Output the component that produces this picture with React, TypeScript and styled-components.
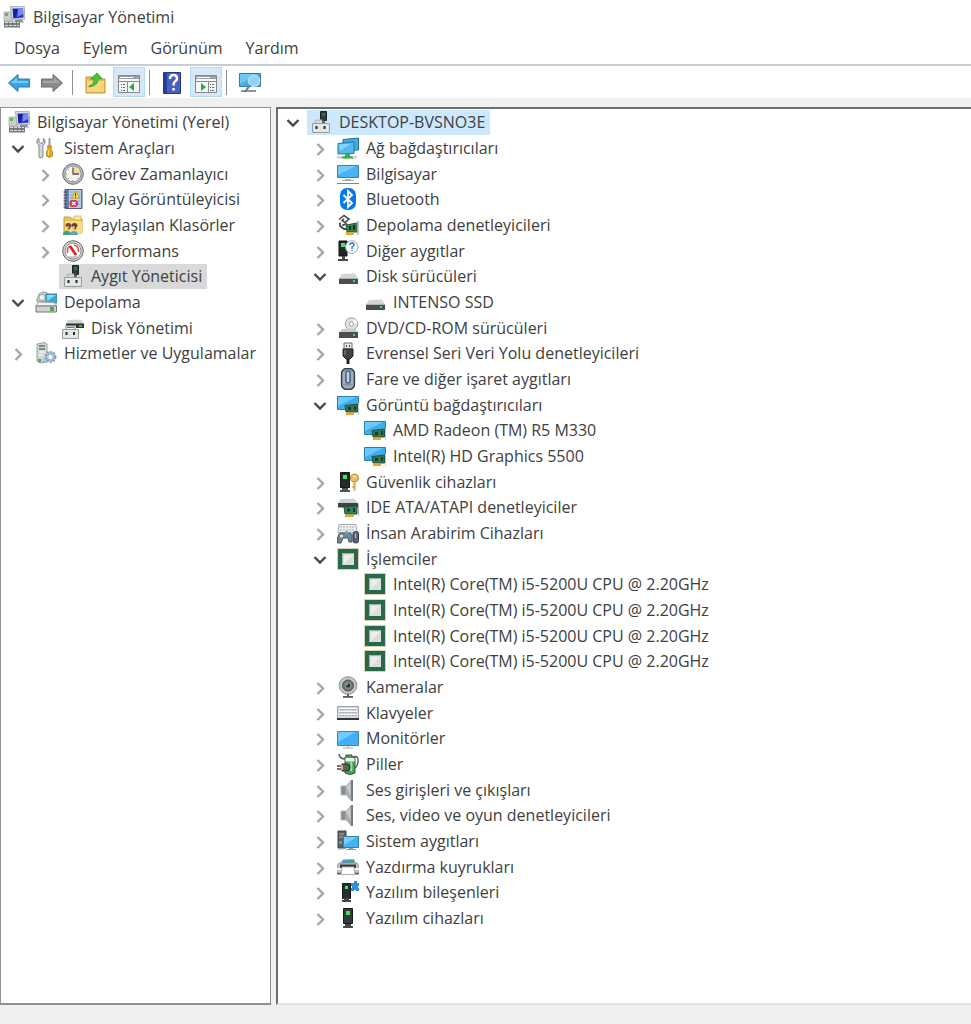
import React, { useState } from "react";
import styled, { createGlobalStyle } from "styled-components";

const GlobalStyle = createGlobalStyle`
  * { box-sizing: border-box; }
  body {
    margin: 0;
    background: #f0f0f0;
    color: #404040;
    font-family: "Open Sans", "Noto Sans", sans-serif;
    font-size: 16px;
    line-height: 24px;
  }
  button { font: inherit; color: inherit; background: none; border: 0; padding: 0; cursor: default; }
`;

const Window = styled.div`
  min-height: 100vh;
  display: flex;
  flex-direction: column;
`;

const TitleBar = styled.header`
  display: flex;
  align-items: center;
  gap: 8px;
  height: 33px;
  padding: 0 3px;
  background: #fff;
`;

const Title = styled.h1`
  margin: 0;
  font-size: 16px;
  font-weight: 400;
  line-height: 24px;
`;

const MenuBar = styled.nav`
  display: flex;
  align-items: center;
  gap: 23px;
  height: 31px;
  padding: 0 14px 2px;
  background: #fff;
`;

const MenuButton = styled.button`
  line-height: 24px;
`;

const ToolBar = styled.div`
  display: flex;
  align-items: center;
  gap: 1px;
  height: 34px;
  padding: 0 3px;
  background: #fff;
  border-top: 2px solid #c9ccd0;
`;

const ToolButton = styled.button<{ $active?: boolean }>`
  display: flex;
  align-items: center;
  justify-content: center;
  width: 32px;
  height: 30px;
  padding-top: 2px;
  background: ${(p) => (p.$active ? "#d3e8fa" : "transparent")};
  border: 1px solid ${(p) => (p.$active ? "#b5d9f7" : "transparent")};
`;

const Separator = styled.span`
  width: 1px;
  height: 25px;
  margin: 0 6px 0 3px;
  background: #8f8f8f;
`;

const Workspace = styled.main`
  flex: 1;
  display: grid;
  grid-template-columns: 271px minmax(0, 1fr);
  gap: 5px;
  padding: 9px 0 19px;
  background: #f0f0f0;
`;

const Pane = styled.section<{ $primary?: boolean }>`
  background: #fff;
  border-style: solid;
  border-width: ${(p) => (p.$primary ? "2px 0 2px 2px" : "1px 1px 2px")};
  border-color: ${(p) => (p.$primary ? "#6e6e6e #6e6e6e #e3e3e3" : "#8d9096")};
  padding: ${(p) => (p.$primary ? "0 0 0 2px" : "1px 0 0 4px")};
`;

const Tree = styled.ul`
  display: grid;
  grid-auto-rows: 26px 26px 25px;
  margin: 0;
  padding: 0;
  list-style: none;
`;

const Row = styled.li<{ $depth: number }>`
  display: flex;
  align-items: center;
  padding-left: ${(p) => p.$depth * 27}px;
`;

const Toggle = styled.button`
  display: flex;
  align-items: center;
  justify-content: center;
  width: 27px;
  height: 24px;
  padding-right: 2px;
`;

const ToggleSpace = styled.span`
  width: 27px;
`;

const Item = styled.button<{ $tint?: string }>`
  display: flex;
  align-items: center;
  gap: 7px;
  height: 25px;
  padding: 0 5px 0 3px;
  white-space: nowrap;
  background: ${(p) => p.$tint ?? "transparent"};
`;

const Glyph = styled.svg`
  display: block;
  flex: none;
`;

const art: Record<string, React.ReactNode> = {
  console: (
    <>
      <path d="M7.500.5 21 0l1 13-13 1z" fill="#d9dce6" stroke="#a3a7b4" />
      <path d="M9.500 2.500h10.500l.5 9-10 1z" fill="#2432c4" />
      <path d="M10 3h5l-3 8.500-1.500.5z" fill="#1420a0" />
      <path d="M15 3h5l.3 5-6 3z" fill="#7488ee" />
      <path d="M1 6h7l1 9H1z" fill="#c9cccb" stroke="#a3a6a5" strokeWidth=".7" />
      <path d="M2 7h3v3H2z" fill="#6db05f" />
      <path d="m12 14 7-.5 2 3h-9z" fill="#8f939d" />
      <path d="M1 15.500h16v6H1z" fill="#777b7f" />
      <path d="M2 16.500h14M2 19.500h14" stroke="#dcdee0" strokeDasharray="3 1" />
    </>
  ),
  tools: (
    <>
      <path d="M2 3q-1 4 2 5v12q2 2 4 0V8q3-1 2-5L8.500 1.500V5L6 6.500 4 5V1.500z" fill="#d3d6d9" stroke="#85898d" />
      <path d="M13.500 1h2v8h-2z" fill="#989ca0" />
      <path d="M12.500 9h4l-.5 3 1.500 3v4q-3 3-6 0v-4l1.500-3z" fill="#f2a515" stroke="#b87512" strokeWidth=".8" />
      <path d="M13.500 13v5" stroke="#ffdd78" />
    </>
  ),
  clock: (
    <>
      <circle cx="11" cy="11" r="10.300" fill="#b7b9bc" stroke="#707478" />
      <circle cx="11" cy="11" r="8" fill="#f4f3ee" stroke="#92969b" />
      <path d="M11 3.500A7.500 7.500 0 0 1 18.500 11H11z" fill="#f5d999" />
      <path d="M11 4.500V11h6" stroke="#4c535c" strokeWidth="1.300" fill="none" />
      <path d="M4 11h1M11 17v1.500M6 6l.7.700M6 16l.7-.7M16 16l-.7-.7" stroke="#84888c" />
    </>
  ),
  events: (
    <>
      <path d="M3 1.500h17v19H3z" fill="#7185b2" stroke="#4f5f8c" />
      <path d="M7 2h12v18H7z" fill="#b5cdee" />
      <path d="M8 4h10M8 7h10M8 10h10M8 13h10M8 16h10" stroke="#7d9fd0" strokeWidth=".7" />
      <path d="M1.500 4h4M1.500 7h4M1.500 10h4M1.500 13h4M1.500 16h4M1.500 19h4" stroke="#43474f" />
      <path d="m13.500 3 4.500 7H9.500z" fill="#f8df35" stroke="#bd9a18" strokeWidth=".8" />
      <path d="M13.500 5v3M13.500 8.500v1" stroke="#493d12" />
      <path d="M9 12h5l2 2v3l-2 2H9l-1.500-2v-3z" fill="#df3844" />
      <path d="m10 14 3.500 3m0-3L10 17" stroke="#fff" strokeWidth="1.200" />
    </>
  ),
  shared: (
    <>
      <path d="M2 3h6l2 2h10v14H2z" fill="#e9c65b" stroke="#c69a38" />
      <path d="M12 2h7v4h-7z" fill="#f9e9a6" stroke="#d1aa4d" strokeWidth=".7" />
      <path d="M3 7h17v12H3z" fill="#f7dc82" />
      <path d="M3.500 12q0-3 3-3t3 3L7 16z" fill="#6a4a2c" />
      <path d="M9.500 12q0-3 3-3t3 3L13 16z" fill="#6b4427" />
      <path d="M4 13q2-2 3 0l-1 3zM10 13q2-2 3 0l-1 3z" fill="#e6b287" />
      <path d="M1 21v-2q4-5 8 0v2z" fill="#36a77c" />
      <path d="M8 21q1-6 7-3l1 3z" fill="#57a8bd" />
    </>
  ),
  performance: (
    <>
      <circle cx="11" cy="11" r="10.300" fill="#d2d2d2" stroke="#656a6e" />
      <circle cx="11" cy="11" r="8" fill="#fff" stroke="#8d8d8d" />
      <path d="M5.500 13V8.500L8 6M12 5q5 1 4.500 7" fill="none" stroke="#d94a4a" strokeWidth="1.500" />
      <path d="m8 6 6 9" stroke="#d91e1e" strokeWidth="2.500" />
      <path d="M7 17h8" stroke="#999" />
    </>
  ),
  device: (
    <>
      <path d="M10.500.5h6v9h-6z" fill="#353a39" stroke="#222" />
      <path d="M12 2h3v3h-3z" fill="#287c37" />
      <path d="M12 9.500h3V13h-3z" fill="#626867" />
      <path d="M5.500 13V9.500H12" fill="none" stroke="#c1c2c2" strokeWidth="2" />
      <path d="M2.500 12.500h17v9h-17z" fill="#e5e6e6" stroke="#989b9d" />
      <path d="M5.500 15h2v3h-2zM13.500 15h2v3h-2z" fill="#262929" />
    </>
  ),
  storage: (
    <>
      <path d="M1.500 10 4 3q5-4 9 0v8z" fill="#cbcecd" stroke="#90969a" />
      <circle cx="7" cy="6.500" r="3" fill="#eff0ee" stroke="#a5aaa9" />
      <path d="M11 3h11v9H11z" fill="#37a9dd" stroke="#487b91" />
      <path d="m12 4h9l-9 6z" fill="#8ad8f4" />
      <path d="m3 11 16 .5 3 3.500H1z" fill="#f0f1f1" stroke="#a5a8a9" />
      <path d="M1 15h20.500v6H1z" fill="#d0d3d3" stroke="#737778" />
      <path d="M15 16h4v4h-4z" fill="#52a848" />
    </>
  ),
  diskmgmt: (
    <>
      <path d="m6 3 13-.5 3 4.500H4z" fill="#d1d3d3" />
      <path d="M4 6.500h18V11H4z" fill="#2f3635" />
      <path d="M17 8h3v2h-3z" fill="#33c34a" />
      <path d="M4 13V9.500h9V13" fill="none" stroke="#c0c2c2" strokeWidth="2" />
      <path d="M.5 12.500h16v9H.5z" fill="#e5e6e6" stroke="#989b9d" />
      <path d="M3.500 15h2v3h-2zM11 15h2v3h-2z" fill="#262929" />
    </>
  ),
  services: (
    <>
      <path d="m2 2 7-1.500L12 2v18l-7 1-3-2z" fill="#d1d5d7" stroke="#9aa0a3" />
      <path d="M4 4h6M4 7h6" stroke="#5d7375" strokeWidth="1.500" />
      <path d="M4 10h6M4 13h4" stroke="#fff" />
      <path d="M3 17h3v3H3z" fill="#5ba56d" />
      <circle cx="15.500" cy="15" r="4.700" fill="#aac4dc" stroke="#86a3c0" strokeWidth="2.500" strokeDasharray="2 1" />
      <circle cx="15.500" cy="15" r="2" fill="#fff" />
      <circle cx="9.500" cy="18.500" r="2" fill="#b4c9da" stroke="#86a3c0" strokeDasharray="1 1" />
    </>
  ),
  network: (
    <>
      <path d="M6 2.500 21.500 1v12L6 14z" fill="#42aae3" stroke="#25749f" />
      <path d="M1 6.500 17 5v11.500L1 17z" fill="#55b9f3" stroke="#2478a4" />
      <path d="M2 7.500 14 6.500 3 14z" fill="#87d3fc" />
      <path d="M0 19h20v2.500H0z" fill="#ced3cf" />
      <path d="M8 17h5v2l3 1v1.500H5V20l3-1z" fill="#35ae4b" />
    </>
  ),
  computer: (
    <>
      <path d="M.5 2.500h21v12H.5z" fill="#48b3f4" stroke="#3983ac" />
      <path d="M1 3h18L1 12z" fill="#76caff" />
      <path d="M8 16.500h6M5 17.500h12" stroke="#a7aeb5" />
      <path d="M0 20.500h22" stroke="#7a858e" />
    </>
  ),
  monitor: (
    <>
      <path d="M.5 4.500h21v14H.5z" fill="#42aff5" stroke="#4386aa" />
      <path d="M1 5h18L1 15z" fill="#71c9fd" />
      <path d="M10 19h2v1.500H6v1h10v-1h-4" fill="#a1a5a8" />
    </>
  ),
  bluetooth: (
    <>
      <rect x="3" y="0" width="16" height="22" rx="7" fill="#0a78ed" />
      <path d="m6.500 7 8.500 8-4 4V3l4 4-8.500 8" fill="none" stroke="#fff" strokeWidth="1.800" />
    </>
  ),
  controller: (
    <>
      <path d="m2 5.500 5-4 5 3.500-4 3.500-3-2 2-1.500" fill="#fff" stroke="#4b4f4e" strokeWidth="1.600" />
      <path d="M3 8.500V12l4 3h5M5 11.500l5-2" fill="none" stroke="#454948" strokeWidth="1.800" />
      <path d="m9 11 11-2v9H10z" fill="#378158" stroke="#1c5c3a" />
      <path d="M12 12h2v4h-2M16 11h2v5h-2" fill="#142f24" />
      <path d="M21 7v14" stroke="#aeb0b1" strokeWidth="1.500" />
      <path d="M9 18h8v3H9z" fill="#e8a632" />
    </>
  ),
  other: (
    <>
      <path d="M2 1h8v15H2z" fill="#222828" stroke="#111" />
      <path d="M4 3h4v4H4z" fill="#58db67" />
      <path d="M5 16h3v3h3v2H1v-2h4z" fill="#454b49" />
      <circle cx="14.800" cy="7" r="6.300" fill="#fbfcfe" stroke="#a0a5ab" />
      <path d="M13 5q0-2 2-2t2 2q0 1-2 2v2M15 10v1" fill="none" stroke="#246fc4" strokeWidth="1.300" />
    </>
  ),
  disk: (
    <>
      <path d="m5 9 13-.5 3 5H2z" fill="#d3d4d4" />
      <path d="M2 13h19v6H2z" fill="#4a4e4d" />
      <path d="M2 13.500h19" stroke="#b0b3b2" />
      <path d="M16 15h2v2h-2z" fill="#43df4e" />
    </>
  ),
  dvd: (
    <>
      <circle cx="14.500" cy="7" r="6.300" fill="#dedfdf" stroke="#a1a4a5" />
      <path d="m14.500 7 3-5q3 2 3 4z" fill="#fff" />
      <circle cx="14.500" cy="7" r="2" fill="#fff" stroke="#a1a1a1" />
      <path d="m5 12 13-.5 3 4H2z" fill="#c9caca" />
      <path d="M2 15h19v6H2z" fill="#4a4e4d" />
      <path d="M16 17h2v2h-2z" fill="#43df4e" />
    </>
  ),
  usb: (
    <>
      <path d="M7 1h8v6H7z" fill="#e9e9e9" stroke="#696d6e" />
      <path d="M9 3h1v2H9zM12 3h1v2h-1z" fill="#444" />
      <path d="M6 7h10v7l-3 3H9l-3-3z" fill="#3d4243" stroke="#222" />
      <path d="M8 8v5" stroke="#8b9092" />
      <path d="M9.500 17h3v5h-3z" fill="#1f2425" />
    </>
  ),
  mouse: (
    <>
      <rect x="4.500" y=".5" width="13" height="21" rx="5" fill="#8b97a6" stroke="#333c49" strokeWidth="1.300" />
      <path d="M7 4v12M15 4v12" stroke="#b4becb" strokeWidth="1.300" />
      <rect x="9" y="3" width="4" height="12" rx="2" fill="#b6d2ec" stroke="#263c5b" />
      <path d="M6.500 17.500q4.500 3.500 9 0" stroke="#bdc6cf" fill="none" />
    </>
  ),
  display: (
    <>
      <path d="M.5 2.500h21v13H.5z" fill="#3caef0" stroke="#2880b1" />
      <path d="M1 3h18L1 12z" fill="#6bc9fd" />
      <path d="M8 11.500 20.500 10v8H9z" fill="#34744e" stroke="#20563a" />
      <path d="M11 13h3v3h-3zM17 12h2v4h-2z" fill="#163d2b" />
      <path d="M9 18.500h8v2.500H9z" fill="#eda52e" />
      <path d="M21.500 9v12" stroke="#c6c9ca" />
    </>
  ),
  security: (
    <>
      <path d="M3.500 1.500h9v15h-9z" fill="#252b2a" stroke="#141818" />
      <path d="M6 4h4v4H6z" fill="#45e65a" />
      <path d="M5 17h6v2h2v2H3v-2h2z" fill="#505655" />
      <circle cx="17.500" cy="7" r="4" fill="#edbf5f" stroke="#bd8930" />
      <circle cx="17.500" cy="5.500" r="1" fill="#fff" />
      <path d="M16.500 11h2v9l-2-1v-2h-1v-2h1z" fill="#d9a545" />
    </>
  ),
  ide: (
    <>
      <path d="m4 3 13-.5 4 4.500H1z" fill="#d0d2d2" />
      <path d="M1 7h20v4.500H1z" fill="#3c4241" />
      <path d="m7 11 13-1v8H8z" fill="#398257" stroke="#1b5335" />
      <path d="M10 12.500h3v3h-3zM16 12h2v4h-2z" fill="#17372a" />
      <path d="M8 18.500h9v2.500H8z" fill="#e8a22d" />
      <path d="M21.500 8v12" stroke="#aeb2b2" />
    </>
  ),
  hid: (
    <>
      <path d="M2 2.500h17l1 8H1z" fill="#eef0f0" stroke="#a5abae" />
      <path d="M3 5h15M3 8h15" stroke="#a8adb0" strokeDasharray="2 1" />
      <path d="M2 12q2-2 4-1l4 1q4-2 5 1v7h-3l-1-4H6l-2 5H.5v-5z" fill="#75838d" stroke="#4e5b65" />
      <circle cx="4.500" cy="14" r="1.500" fill="#e9eef1" />
      <circle cx="9.500" cy="11" r="2" fill="#4ba9d8" />
      <rect x="16" y="9.500" width="5.500" height="11.500" rx="2.500" fill="#53657a" stroke="#2e3c4c" />
      <path d="M18.500 11.500v4.500" stroke="#b8cee4" />
    </>
  ),
  cpu: (
    <>
      <rect x=".5" y=".5" width="21" height="21" fill="none" stroke="#b9a566" strokeDasharray="1 1" />
      <rect x="3" y="3" width="16" height="16" fill="#dcdddd" stroke="#28694a" strokeWidth="4" />
      <path d="M5.500 16.500v-11h11" stroke="#9fb5a8" fill="none" />
      <path d="M7 7h9l-9 9z" fill="#ededed" />
    </>
  ),
  camera: (
    <>
      <circle cx="11" cy="9.500" r="8.800" fill="#c5c6c6" stroke="#8b8e8e" />
      <circle cx="11" cy="9.500" r="5.500" fill="#6e7374" stroke="#505556" />
      <circle cx="11" cy="9.500" r="2.800" fill="#262d32" stroke="#9da7ad" />
      <circle cx="10" cy="8.500" r="1" fill="#8fb1ca" />
      <path d="M11 18v2M6 20.800h10" stroke="#56595a" strokeWidth="1.800" />
    </>
  ),
  keyboard: (
    <>
      <path d="M.5 4.500h21v13H.5z" fill="#d6d9db" stroke="#a0a5a9" />
      <path d="M2.500 7.500h17M2.500 10.500h17M2.500 13.500h17" stroke="#a3a8ac" strokeDasharray="2 1" />
      <path d="M2 6.500h18M2 9.500h18M2 12.500h18" stroke="#f9f9fa" />
      <path d="M0 17h22" stroke="#303539" strokeWidth="2" />
    </>
  ),
  battery: (
    <>
      <path d="M2 1q1 5 6 5M16 4q6-2 5 5t-6 6" fill="none" stroke="#5c605f" strokeWidth="1.500" />
      <path d="M9 2h6v2h3v16q-5 3-10 0V4h1z" fill="#46a354" stroke="#3c5941" />
      <path d="M8.500 5h9v3.500h-9z" fill="#eff4ef" />
      <path d="M14 9q1 4 0 9" stroke="#91e596" strokeWidth="2" fill="none" />
      <path d="M5 11h4q4 0 4 3.500T9 18H5z" fill="#5c6361" stroke="#252a28" />
      <path d="M0 13h5M0 16h5" stroke="#4e463b" strokeWidth="1.500" />
      <path d="M4 12h2v5H4z" fill="#d5b358" />
    </>
  ),
  speaker: (
    <>
      <path d="M4 7h5v9H4z" fill="#878c90" stroke="#b4b6b8" />
      <path d="m9 7 5-6h2v21h-2l-5-6z" fill="#a9adb1" />
      <path d="M14 1h2v21h-2z" fill="#777c81" />
      <path d="m9.500 8 4-5v14z" fill="#c9cccd" />
    </>
  ),
  system: (
    <>
      <path d="M1 1h8v17H1z" fill="#5b6366" stroke="#3d4548" />
      <path d="M2 4h5M2 7h5" stroke="#a4afb2" />
      <path d="M2 11h3v3H2z" fill="#38c052" />
      <path d="M6.500 6.500h15v11h-15z" fill="#43b2f3" stroke="#347da5" />
      <path d="M7 7h13L7 15z" fill="#7bcdfb" />
      <path d="M12 18h4v1h3v1H9v-1h3z" fill="#92999f" />
      <path d="M1 19h6" stroke="#a6aaac" />
    </>
  ),
  printer: (
    <>
      <path d="m6 4 11-.5 1 4H4z" fill="#369ad8" stroke="#8da6b2" />
      <path d="M13 4h3v3h-3z" fill="#3db26b" />
      <path d="M2 7h18l2 3v8H0v-8z" fill="#c3c7c8" stroke="#8b9093" />
      <path d="M3 8.500h16V12H3z" fill="#34393b" />
      <path d="M5 11h12l1 7.500H4z" fill="#fff" stroke="#a9adaf" />
      <path d="M0 13h4M18 13h4" stroke="#f1f2f2" strokeWidth="2" />
      <path d="M0 17.500h4M18 17.500h4" stroke="#5d6265" strokeWidth="1.500" />
    </>
  ),
  component: (
    <>
      <path d="M5.500 2.500h8v15h-8z" fill="#272d2c" stroke="#171b1b" />
      <path d="M8 5h3v3H8z" fill="#45e65a" />
      <path d="M7 17h5v2h2v2H5v-2h2z" fill="#414746" />
      <path d="M14 2h3V0h3v2h2v3h-1v2h1v3h-3V9h-2v1h-3V7h1V5h-1z" fill="#338dd5" />
    </>
  ),
  software: (
    <>
      <path d="M6.500 1.500h9v15h-9z" fill="#343939" stroke="#171b1b" />
      <path d="M9 4h4v4H9z" fill="#45e65a" />
      <path d="M8 17h6v2h2v2H6v-2h2z" fill="#454b4a" />
    </>
  ),
  back: (
    <>
      <path d="M.5 11 10 2.500V7h11.500v8H10v4.500z" fill="#38a5e2" stroke="#267bac" />
      <path d="m3 11 6-5.500V9h11v2z" fill="#76cbf5" />
    </>
  ),
  forward: (
    <>
      <path d="M21.500 11 12 2.500V7H.5v8H12v4.500z" fill="#8c8c8c" stroke="#6e6e6e" />
      <path d="m19 11-6-5.500V9H2v2z" fill="#a6a6a6" />
    </>
  ),
  up: (
    <>
      <path d="M1 5h7l2 2h10v14H1z" fill="#e9bf59" stroke="#c89637" />
      <path d="M2 9h17v11H2z" fill="#f7d67c" />
      <path d="M4 14q5-1 5-7L5.500 7 12 1l5 5.500h-3.500Q13 14 4 15z" fill="#48c53d" stroke="#2b9430" strokeWidth=".8" />
    </>
  ),
  leftPanel: (
    <>
      <path d="M.5 3.500h21v17H.5z" fill="#f5f6f7" stroke="#85898c" />
      <path d="M1 4h20v3H1z" fill="#9da1a4" />
      <path d="M2 5.500h13" stroke="#fff" />
      <path d="M1 9.500h20M9.500 10v10" stroke="#888d90" />
      <path d="M3 12.500h4M3 15.500h4M3 18.500h4" stroke="#62676a" strokeDasharray="1 1 2" />
      <path d="m16 11v8l-5-4z" fill="#39a534" />
    </>
  ),
  rightPanel: (
    <>
      <path d="M.5 3.500h21v17H.5z" fill="#f5f6f7" stroke="#85898c" />
      <path d="M1 4h20v3H1z" fill="#9da1a4" />
      <path d="M2 5.500h13" stroke="#fff" />
      <path d="M1 9.500h20M13.500 10v10" stroke="#888d90" />
      <path d="M15 12.500h4M15 15.500h4M15 18.500h4" stroke="#62676a" strokeDasharray="1 1 2" />
      <path d="m6 11v8l5-4z" fill="#39a534" />
    </>
  ),
  help: (
    <>
      <path d="M1.500.5h17v21h-17z" fill="#4760c0" stroke="#20368b" />
      <path d="M2 1h3v20H2z" fill="#263e9b" />
      <path d="M8 7q0-4 3.500-4T15 6.500q0 2-2 3-1.500 1-1.500 4" fill="none" stroke="#fff" strokeWidth="2.500" />
      <path d="M10.300 16h2.500v2.500h-2.500z" fill="#fff" />
    </>
  ),
  scan: (
    <>
      <path d="M.5 1.500h21v13H.5z" fill="#3fb0ea" stroke="#3e7794" />
      <path d="M1 2h18L1 12z" fill="#70c7f4" />
      <path d="M2 19h15" stroke="#8a9398" strokeWidth="2" />
      <circle cx="15" cy="9" r="5.500" fill="#8fd3f2" stroke="#b9dcec" strokeWidth="1.500" />
      <path d="m11 13-5 7" stroke="#637b89" strokeWidth="2" />
    </>
  ),
};

const Icon = ({ name }: { name: string }) => (
  <Glyph width="22" height="22" viewBox="0 0 22 22" aria-hidden="true">
    {art[name]}
  </Glyph>
);

const Chevron = ({ open }: { open: boolean }) => (
  <Glyph width="14" height="16" viewBox="0 0 14 16" fill="none" strokeWidth="2.400" aria-hidden="true">
    {open ? <path d="M1.500 6 7 11.500 12.500 6" stroke="#484848" /> : <path d="m4.500 4 5.500 5.500L4.500 15" stroke="#a6a6a6" />}
  </Glyph>
);

type Node = { label: string; icon: string; depth: number; open?: boolean; bare?: boolean };

const consoleNodes: Node[] = [
  { label: "Bilgisayar Yönetimi (Yerel)", icon: "console", depth: 0, bare: true },
  { label: "Sistem Araçları", icon: "tools", depth: 0, open: true },
  { label: "Görev Zamanlayıcı", icon: "clock", depth: 1, open: false },
  { label: "Olay Görüntüleyicisi", icon: "events", depth: 1, open: false },
  { label: "Paylaşılan Klasörler", icon: "shared", depth: 1, open: false },
  { label: "Performans", icon: "performance", depth: 1, open: false },
  { label: "Aygıt Yöneticisi", icon: "device", depth: 1 },
  { label: "Depolama", icon: "storage", depth: 0, open: true },
  { label: "Disk Yönetimi", icon: "diskmgmt", depth: 1 },
  { label: "Hizmetler ve Uygulamalar", icon: "services", depth: 0, open: false },
];

const cpuLabel = "Intel(R) Core(TM) i5-5200U CPU @ 2.20GHz";

const deviceNodes: Node[] = [
  { label: "DESKTOP-BVSNO3E", icon: "device", depth: 0, open: true },
  { label: "Ağ bağdaştırıcıları", icon: "network", depth: 1, open: false },
  { label: "Bilgisayar", icon: "computer", depth: 1, open: false },
  { label: "Bluetooth", icon: "bluetooth", depth: 1, open: false },
  { label: "Depolama denetleyicileri", icon: "controller", depth: 1, open: false },
  { label: "Diğer aygıtlar", icon: "other", depth: 1, open: false },
  { label: "Disk sürücüleri", icon: "disk", depth: 1, open: true },
  { label: "INTENSO SSD", icon: "disk", depth: 2 },
  { label: "DVD/CD-ROM sürücüleri", icon: "dvd", depth: 1, open: false },
  { label: "Evrensel Seri Veri Yolu denetleyicileri", icon: "usb", depth: 1, open: false },
  { label: "Fare ve diğer işaret aygıtları", icon: "mouse", depth: 1, open: false },
  { label: "Görüntü bağdaştırıcıları", icon: "display", depth: 1, open: true },
  { label: "AMD Radeon (TM) R5 M330", icon: "display", depth: 2 },
  { label: "Intel(R) HD Graphics 5500", icon: "display", depth: 2 },
  { label: "Güvenlik cihazları", icon: "security", depth: 1, open: false },
  { label: "IDE ATA/ATAPI denetleyiciler", icon: "ide", depth: 1, open: false },
  { label: "İnsan Arabirim Cihazları", icon: "hid", depth: 1, open: false },
  { label: "İşlemciler", icon: "cpu", depth: 1, open: true },
  { label: cpuLabel, icon: "cpu", depth: 2 },
  { label: cpuLabel, icon: "cpu", depth: 2 },
  { label: cpuLabel, icon: "cpu", depth: 2 },
  { label: cpuLabel, icon: "cpu", depth: 2 },
  { label: "Kameralar", icon: "camera", depth: 1, open: false },
  { label: "Klavyeler", icon: "keyboard", depth: 1, open: false },
  { label: "Monitörler", icon: "monitor", depth: 1, open: false },
  { label: "Piller", icon: "battery", depth: 1, open: false },
  { label: "Ses girişleri ve çıkışları", icon: "speaker", depth: 1, open: false },
  { label: "Ses, video ve oyun denetleyicileri", icon: "speaker", depth: 1, open: false },
  { label: "Sistem aygıtları", icon: "system", depth: 1, open: false },
  { label: "Yazdırma kuyrukları", icon: "printer", depth: 1, open: false },
  { label: "Yazılım bileşenleri", icon: "component", depth: 1, open: false },
  { label: "Yazılım cihazları", icon: "software", depth: 1, open: false },
];

type TreeViewProps = { label: string; nodes: Node[]; initial: number; tint: string };

function TreeView({ label, nodes, initial, tint }: TreeViewProps) {
  const [open, setOpen] = useState(nodes.map((n) => n.open));
  const [selected, setSelected] = useState(initial);
  const toggle = (i: number) => setOpen(open.map((o, k) => (k === i ? !o : o)));

  let hiddenBelow = Infinity;
  return (
    <Tree aria-label={label}>
      {nodes.map((node, i) => {
        if (node.depth > hiddenBelow) return null;
        hiddenBelow = open[i] === false ? node.depth : Infinity;
        return (
          <Row key={i} $depth={node.depth}>
            {node.open !== undefined && (
              <Toggle aria-label={node.label} aria-expanded={open[i]} onClick={() => toggle(i)}>
                <Chevron open={!!open[i]} />
              </Toggle>
            )}
            {node.open === undefined && !node.bare && <ToggleSpace />}
            <Item $tint={selected === i ? tint : undefined} onClick={() => setSelected(i)}>
              <Icon name={node.icon} />
              {node.label}
            </Item>
          </Row>
        );
      })}
    </Tree>
  );
}

export default function App() {
  return (
    <>
      <GlobalStyle />
      <Window>
        <TitleBar>
          <Icon name="console" />
          <Title>Bilgisayar Yönetimi</Title>
        </TitleBar>
        <MenuBar>
          {["Dosya", "Eylem", "Görünüm", "Yardım"].map((m) => (
            <MenuButton key={m}>{m}</MenuButton>
          ))}
        </MenuBar>
        <ToolBar>
          <ToolButton aria-label="Geri"><Icon name="back" /></ToolButton>
          <ToolButton aria-label="İleri"><Icon name="forward" /></ToolButton>
          <Separator />
          <ToolButton aria-label="Yukarı"><Icon name="up" /></ToolButton>
          <ToolButton $active aria-label="Konsol ağacı"><Icon name="leftPanel" /></ToolButton>
          <Separator />
          <ToolButton aria-label="Yardım"><Icon name="help" /></ToolButton>
          <ToolButton $active aria-label="Eylem bölmesi"><Icon name="rightPanel" /></ToolButton>
          <Separator />
          <ToolButton aria-label="Donanım değişikliklerini tara"><Icon name="scan" /></ToolButton>
        </ToolBar>
        <Workspace>
          <Pane>
            <TreeView label="Konsol ağacı" nodes={consoleNodes} initial={6} tint="#d9d9d9" />
          </Pane>
          <Pane $primary>
            <TreeView label="Aygıtlar" nodes={deviceNodes} initial={0} tint="#cce8ff" />
          </Pane>
        </Workspace>
      </Window>
    </>
  );
}
